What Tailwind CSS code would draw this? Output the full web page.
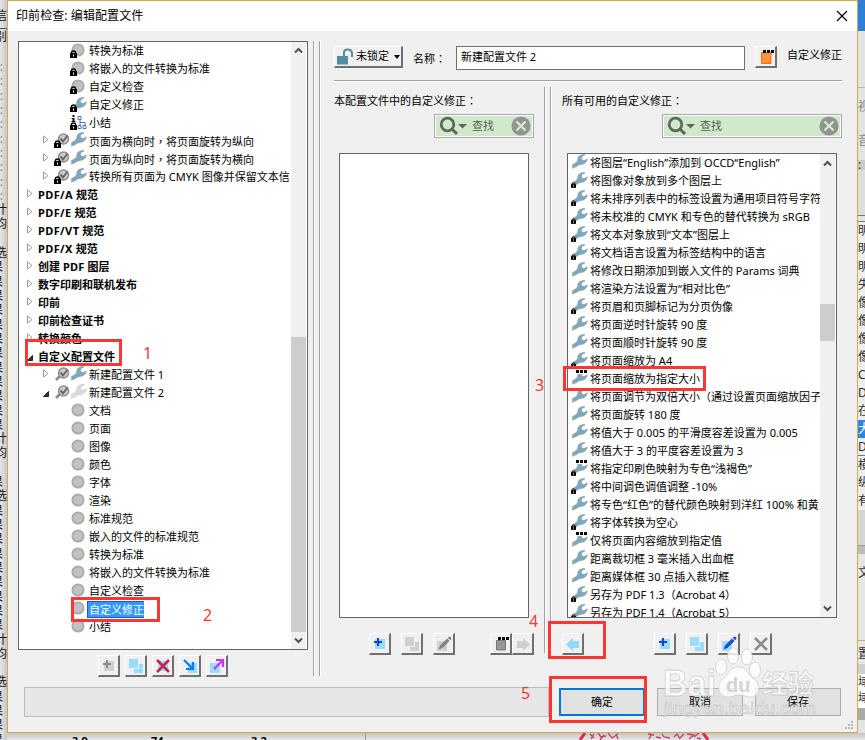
<!DOCTYPE html>
<html lang="zh-CN">
<head>
<meta charset="utf-8">
<title>印前检查: 编辑配置文件</title>
<script src="https://cdn.jsdelivr.net/npm/@tailwindcss/browser@4"></script>
</head>
<body class="relative w-[865px] h-[740px] overflow-hidden bg-[#e3e3e3] text-black text-[11px] font-['Noto_Sans','Noto_Sans_CJK_SC',sans-serif]">

<svg class="hidden">
  <symbol id="wrench" viewBox="0 0 16 15"><path d="M13 .3C9 .3 5.800 1.600 5.500 5.400C5.400 7.200 4.600 8 3 8.900L.3 10.500V14.600L4.400 12.800C6 11.600 7.200 10.800 9 10.800C12.400 10.600 14.800 8.800 15.700 4.600L12.200 6.200C10.600 6.500 9.300 5.200 9.700 3.700C10.100 2.300 11.500 1.900 13 1.200Z" stroke-width=".4" stroke="#82a7b8" stroke-opacity=".5"/></symbol>
  <symbol id="lock" viewBox="0 0 7 8"><path d="M1.500 4V2.200Q1.500 1 3.500 1T5.500 2.200V4" fill="none" stroke="#000" stroke-width="1.400"/><path d="M0 3h7v5H0z" fill="#000"/><path d="M3 4.500h1v2H3z" fill="#fff"/></symbol>
  <symbol id="dots" viewBox="0 0 11 3"><path d="M0 0h3v3H0zM4 0h3v3H4zM8 0h3v3H8z" fill="#000"/></symbol>
  <symbol id="ball" viewBox="0 0 14 14"><circle cx="7" cy="7" r="5.600" fill="#c2c2c2" stroke="#adadad" stroke-width="2"/></symbol>
  <symbol id="lens" viewBox="0 0 15 14"><path d="M5 9L1 13" stroke="#8c8c8c" stroke-width="2.600"/><circle cx="8.500" cy="6" r="5" fill="#cdcdcd" stroke="#8c8c8c" stroke-width="1.500"/><path d="M5.500 5.500L8 8.500L12.500 2.500" fill="none" stroke="#686868" stroke-width="2"/></symbol>
  <symbol id="tree" viewBox="0 0 15 15"><path d="M1 0h2v2H1zM0 3h3v3h1v1H0V6h1V4H0z" fill="#111"/><path d="M6.500 1.500h3v3h-3zM8.500 4.500v6M8.500 7.500h5v3M6.500 10.500h3v3h-3zM11.500 10.500h3v3h-3z" fill="none" stroke="#5471b8"/></symbol>
  <symbol id="closed" viewBox="0 0 6 9"><path d="M.5.9L5 4.500L.5 8.100Z" fill="#fff" stroke="#9b9b9b"/></symbol>
  <symbol id="open" viewBox="0 0 6 6"><path d="M5.500.5V5.500H.5Z" fill="#333" stroke="#222"/></symbol>
  <symbol id="up" viewBox="0 0 9 7"><path d="M1 5.500L4.500 2L8 5.500" fill="none" stroke="#505050" stroke-width="2"/></symbol>
  <symbol id="down" viewBox="0 0 9 7"><path d="M1 1.500L4.500 5L8 1.500" fill="none" stroke="#505050" stroke-width="2"/></symbol>
  <symbol id="search" viewBox="0 0 28 20"><circle cx="8.500" cy="8.500" r="6.300" fill="none" stroke="#5f675d" stroke-width="2.800"/><path d="M13 13L18 18" stroke="#5f675d" stroke-width="3"/><path d="M19 8h9L23.500 12.500z" fill="#5f675d"/></symbol>
  <symbol id="clear" viewBox="0 0 20 20"><circle cx="10" cy="10" r="9.600" fill="#929492"/><path d="M5.500 5.500L14.500 14.500M14.500 5.500L5.500 14.500" stroke="#d6ecd2" stroke-width="2.200"/></symbol>
  <symbol id="add" viewBox="0 0 20 20"><path d="M5 5h10v10H5z" fill="#9adcfa"/><path d="M8 4v8M4 8h8" stroke="#1348c8" stroke-width="2"/></symbol>
  <symbol id="add-off" viewBox="0 0 20 20"><path d="M5 5h10v10H5z" fill="#cfcfcf"/><path d="M8 4v8M4 8h8" stroke="#8a8a8a" stroke-width="2"/></symbol>
  <symbol id="copy" viewBox="0 0 20 20"><path d="M3 3h9v9H3zM13 8h4v9H8v-4h5z"/></symbol>
  <symbol id="cross" viewBox="0 0 20 20"><path d="M4 4L16 16M16 4L4 16" fill="none" stroke-width="2.600"/></symbol>
  <symbol id="pencil" viewBox="0 0 20 20"><path d="M4.500 15.500L6 11.500L13 4.500L15.500 7L8.500 14ZM13.700 3.800L15 2.700H16.500L17.300 3.500V5L16.200 6.300Z"/></symbol>
</svg>

<!-- desktop windows visible around the dialog -->
<div id="leftEdge" class="absolute left-0 top-0 w-[7px] h-[740px] overflow-hidden bg-linear-to-r from-[#e6e6e6] to-[#c6c6c6] text-[12px] text-[#151515]"></div>
<div id="rightEdge" class="absolute left-[858px] top-0 w-[7px] h-[740px] overflow-hidden text-[12px] text-[#303030]"></div>
<div class="absolute left-[7px] top-[733px] w-[858px] h-[7px] overflow-hidden bg-linear-to-b from-[#c4c4c4] to-[#e8e8e8] text-[11px] leading-[15px] font-bold">
  <div class="flex h-[7px]">
    <span class="pl-[65px] w-[144px]">3.9</span><span class="w-[100px]">74</span><span class="w-[114px]">3.2</span><span class="w-px bg-[#999]"></span>
    <svg class="ml-[213px]" width="130" height="7" fill="none" stroke="#c93a72" stroke-width="1.300"><path d="M1 7L6 0M124 0L129 7" stroke="#e0274c" stroke-width="3"/><path d="M11 1l4 4M15 1l-3 5M19 0l3 4 5-1M25 2l-4 5M29 0l4 5 6-4M37 1l2 5M69 1l6 1M72 2l-2 4M77 4l5 1M83 1l2 3 6 1M95 4l3-3 3 5M105 1l-4 4M108 1l7 1-5 4M115 4l5-4M118 5l4 1"/></svg>
  </div>
</div>

<main class="absolute left-[7px] top-0 w-[851px] h-[733px] border border-[#d3a94f] bg-[#f0f0f0] flex flex-col">
  <header class="h-[30px] shrink-0 bg-white flex items-center justify-between pl-2 pr-[9px]">
    <h1 class="text-[12px] leading-[16px] tracking-[0.08px]">印前检查: 编辑配置文件</h1>
    <svg width="12" height="12" viewBox="0 0 12 12" class="mb-px"><path d="M1 1L11 11M11 1L1 11" stroke="#000" stroke-width="1.200"/></svg>
  </header>

  <div class="flex h-[646px] pt-[10px] pl-[10px]">
    <section class="w-[290px] shrink-0">
      <div class="h-[609px] border border-[#646464] bg-white flex overflow-hidden">
        <div id="tree-list" class="w-[272px] shrink-0 overflow-hidden"></div>
        <div class="w-[15px] bg-[#f0f0f0] flex flex-col items-center">
          <svg class="mt-[5px]" width="9" height="7"><use href="#up"/></svg>
          <div class="mt-[283px] w-full h-[295px] bg-[#cdcdcd]"></div>
          <svg class="mt-[5px]" width="9" height="7"><use href="#down"/></svg>
        </div>
      </div>
      <div class="flex gap-[5px] pt-[5px] pl-[80px]" id="tools-left"></div>
    </section>

    <div class="ml-[5px] w-[8px] h-[635px] flex justify-between shrink-0">
      <i class="w-[2px] bg-white border-l border-[#a0a0a0]"></i><i class="w-[2px] bg-white border-l border-[#a0a0a0]"></i>
    </div>

    <section class="ml-[13px] w-[508px] shrink-0">
      <div class="h-[39px] pt-[5px] flex items-start">
        <button class="w-[69px] h-[22px] bg-[#f0f0f0] border-t border-l border-r-2 border-b-2 border-t-white border-l-white border-r-[#707070] border-b-[#707070] flex items-center pl-[2px]">
          <svg class="shrink-0" width="17" height="17" viewBox="0 0 17 17"><path d="M0 8h11v8.500H0z" fill="#578ba2"/><path d="M7 8V4.500Q7 1.500 10.700 1.500T15 5V9" fill="none" stroke="#578ba2" stroke-width="2"/></svg>
          <span class="ml-[2px] whitespace-nowrap">未锁定</span>
          <svg class="ml-[5px] shrink-0" width="6" height="4"><path d="M0 0h6L3 4z"/></svg>
        </button>
        <span class="ml-[10px] w-[43px] mt-[3px] leading-[18px]">名称<span class="font-['Noto_Sans_CJK_TC']" lang="zh-TW">：</span></span>
        <div class="w-[289px] h-[24px] bg-white border border-[#707070] pl-[4px] leading-[20px] text-[11px]">新建配置文件 2</div>
        <button class="ml-[10px] w-[22px] h-[22px] border-t border-l border-r-2 border-b-2 border-t-white border-l-white border-r-[#707070] border-b-[#707070]">
          <svg width="20" height="20"><path d="M5.500 5.500h9.500v11H5.500z" fill="#ff9440" stroke="#f46b12"/><path d="M7 3h3v3H7zM11 3h3v3h-3zM15 3h3v3h-3z"/></svg>
        </button>
        <span class="ml-[10px] leading-[17px] whitespace-nowrap">自定义修正</span>
      </div>
      <div class="h-[2px] bg-white border-t border-[#a0a0a0]"></div>

      <div class="flex pt-[5px]">
        <div class="w-[200px] shrink-0">
          <h2 class="h-[27px] leading-[27px]">本配置文件中的自定义修正<span class="font-['Noto_Sans_CJK_TC']" lang="zh-TW">：</span></h2>
          <div class="ml-[100px] w-[100px] h-[24px] border border-[#a7aaad] bg-[#cfe9ca] ring-1 ring-inset ring-white flex items-center pl-[4px] pr-[2px]">
            <svg width="28" height="20"><use href="#search"/></svg><span class="ml-[5px] text-[#555f53]">查找</span><svg class="ml-auto" width="20" height="20"><use href="#clear"/></svg>
          </div>
          <div class="mt-[15px] ml-[5px] w-[190px] h-[465px] bg-white border border-[#646464]"></div>
          <div class="mt-[15px] ml-[35px] flex" id="tools-mid"></div>
        </div>
        <div class="ml-[10px] w-[8px] h-[566px] flex justify-between shrink-0">
          <i class="w-[2px] bg-white border-l border-[#a0a0a0]"></i><i class="w-[2px] bg-white border-l border-[#a0a0a0]"></i>
        </div>
        <div class="ml-[10px] w-[280px] shrink-0">
          <h2 class="h-[27px] leading-[27px]">所有可用的自定义修正<span class="font-['Noto_Sans_CJK_TC']" lang="zh-TW">：</span></h2>
          <div class="ml-[100px] w-[180px] h-[24px] border border-[#a7aaad] bg-[#cfe9ca] ring-1 ring-inset ring-white flex items-center pl-[4px] pr-[2px]">
            <svg width="28" height="20"><use href="#search"/></svg><span class="ml-[5px] text-[#555f53]">查找</span><svg class="ml-auto" width="20" height="20"><use href="#clear"/></svg>
          </div>
          <div class="mt-[15px] ml-[5px] w-[270px] h-[465px] bg-white border border-[#646464] flex overflow-hidden">
            <div id="fix-list" class="w-[252px] shrink-0 overflow-hidden"></div>
            <div class="w-[15px] bg-[#f0f0f0] flex flex-col items-center">
              <svg class="mt-[6px] shrink-0" width="9" height="7"><use href="#up"/></svg>
              <div class="mt-[137px] w-full h-[37px] shrink-0 bg-[#cdcdcd]"></div>
              <svg class="mt-[264px] shrink-0" width="9" height="7"><use href="#down"/></svg>
            </div>
          </div>
          <div class="mt-[15px] flex" id="tools-right"></div>
        </div>
      </div>
    </section>
  </div>

  <footer class="flex pl-[16px] pt-[10px] items-start text-[11px]">
    <div class="w-[525px] h-[30px] bg-[#e6e6e6] border border-[#bcbcbc]"></div>
    <button class="ml-[10px] mt-px w-[86px] h-[28px] bg-[#e1e1e1] border-2 border-[#0078d7]">确定</button>
    <button class="ml-[12px] mt-px w-[86px] h-[28px] bg-[#e1e1e1] border border-[#adadad]">取消</button>
    <button class="ml-[12px] mt-px w-[86px] h-[28px] bg-[#e1e1e1] border border-[#adadad]">保存</button>
  </footer>
  <svg class="absolute right-[3px] bottom-[2px]" width="9" height="9" fill="#b8b8b8"><path d="M6 0h2v2H6zM3 3h2v2H3zM6 3h2v2H6zM0 6h2v2H0zM3 6h2v2H3zM6 6h2v2H6z"/></svg>
</main>

<!-- watermark -->
<svg class="absolute left-[655px] top-[640px] font-['Liberation_Sans','Noto_Sans_CJK_SC',sans-serif]" width="175" height="85" fill="#fff" fill-opacity=".8" stroke="#bdbdbd" stroke-opacity=".7" stroke-width=".8">
  <text x="8" y="56" font-size="36" font-weight="bold" textLength="53" lengthAdjust="spacingAndGlyphs">Bai</text>
  <ellipse cx="66" cy="27" rx="5.500" ry="8"/><ellipse cx="78" cy="16" rx="5.500" ry="8"/><ellipse cx="92" cy="17" rx="5.500" ry="8"/><ellipse cx="100" cy="30" rx="5.500" ry="8"/>
  <path d="M83 27C75 27 74 34 69 38C61 44 62 56 72 57C78 57 80 55 84 55S91 57 96 57C106 56 106 44 98 38C92 34 92 27 83 27Z"/>
  <text x="71" y="52" font-size="20" font-weight="bold" fill="#c9c9c9" stroke="none">du</text>
  <text x="107" y="53" font-size="26" font-weight="bold">经验</text>
  <text x="9" y="74" font-size="17" fill-opacity=".6" textLength="152" lengthAdjust="spacingAndGlyphs">jingyan.baidu.com</text>
</svg>

<!-- step markers -->
<div class="absolute left-[25px] top-[339px] w-[97px] h-[27px] border-3 border-[#fb3735]"></div>
<div class="absolute left-[71px] top-[597px] w-[89px] h-[25px] border-3 border-[#fb3735]"></div>
<div class="absolute left-[563px] top-[366px] w-[143px] h-[25px] border-3 border-[#fb3735]"></div>
<div class="absolute left-[548px] top-[621px] w-[58px] h-[38px] border-3 border-[#fb3735]"></div>
<div class="absolute left-[549px] top-[676px] w-[98px] h-[47px] border-3 border-[#fb3735]"></div>
<b class="absolute left-[143px] top-[343px] text-[16px] leading-[20px] font-normal text-[#fb3735]">1</b>
<b class="absolute left-[203px] top-[605px] text-[16px] leading-[20px] font-normal text-[#fb3735]">2</b>
<b class="absolute left-[535px] top-[375px] text-[16px] leading-[20px] font-normal text-[#fb3735]">3</b>
<b class="absolute left-[529px] top-[611px] text-[16px] leading-[20px] font-normal text-[#fb3735]">4</b>
<b class="absolute left-[521px] top-[683px] text-[16px] leading-[20px] font-normal text-[#fb3735]">5</b>

<script>
const $ = id => document.getElementById(id);
const wrench = '<svg class="shrink-0 fill-[#82a7b8]" width="16" height="15"><use href="#wrench"/></svg>';
const lock = '<svg class="absolute -left-px -bottom-px" width="7" height="8"><use href="#lock"/></svg>';
const icons = {
  ball: '<svg width="14" height="14"><use href="#ball"/></svg>',
  wrench,
  tree: '<svg width="16" height="15"><use href="#tree"/></svg>'
};
// centred full-width punctuation
const punct = t => t.replace(/[，：]/g, m => `<span lang="zh-TW" class="font-['Noto_Sans_CJK_TC']">${m}</span>`);

// kind: g = group, p = profile, c = child entry
const tree = [
  ['c','转换为标准','ball',1],['c','将嵌入的文件转换为标准','ball',1],['c','自定义检查','ball',1],['c','自定义修正','wrench',1],['c','小结','tree',1],
  ['p','页面为横向时，将页面旋转为纵向',0,1],['p','页面为纵向时，将页面旋转为横向',0,1],['p','转换所有页面为 CMYK 图像并保留文本信',0,1],
  ['g','<span class="tracking-[0.4px]">PDF/A</span> 规范'],['g','<span class="tracking-[0.4px]">PDF/E</span> 规范'],['g','<span class="tracking-[0.4px]">PDF/VT</span> 规范'],['g','<span class="tracking-[0.4px]">PDF/X</span> 规范'],['g','创建 <span class="tracking-[0.3px]">PDF</span> 图层'],['g','数字印刷和联机发布'],['g','印前'],['g','印前检查证书'],['g','转换颜色'],['g','自定义配置文件',1],
  ['p','新建配置文件 1'],['p','新建配置文件 2',1],
  ...['文档','页面','图像','颜色','字体','渲染','标准规范','嵌入的文件的标准规范','转换为标准','将嵌入的文件转换为标准','自定义检查','自定义修正','小结'].map(t => ['c',t,'ball',0])
];
$('tree-list').innerHTML = tree.map(([k,t,a,l], i) => {
  const arrow = a === 1 ? '<svg class="mt-[1px]" width="6" height="6"><use href="#open"/></svg>' : '<svg class="-mt-[3px]" width="6" height="9"><use href="#closed"/></svg>';
  if (k === 'g') return `<div class="h-[18px] flex items-center pl-[8px] whitespace-nowrap font-bold"><span class="w-[11px] flex shrink-0">${arrow}</span><span class="pt-px">${t}</span></div>`;
  if (k === 'p') return `<div class="h-[18px] flex items-center pl-[24px] whitespace-nowrap"><span class="w-[12px] flex shrink-0">${arrow}</span><span class="relative flex w-[16px] h-[14px] shrink-0 -mt-[3px]"><svg width="15" height="14"><use href="#lens"/></svg>${l ? lock : ''}</span><span class="flex w-[18px] h-[15px] shrink-0 -mt-[3px]">${a === 1 ? '<svg class="fill-[#d9d9d9]" width="16" height="15"><use href="#wrench"/></svg>' : wrench}</span><span class="pt-px">${punct(t)}</span></div>`;
  const sel = i === 31;
  return `<div class="h-[18px] flex items-center pl-[52px] whitespace-nowrap"><span class="relative flex w-[16px] h-[14px] shrink-0 -mt-[3px]">${icons[a]}${l ? lock : ''}</span><span class="${sel ? 'h-[17px] leading-[16px] w-[57px] pl-px border border-r-0 border-[#20609f] bg-[#3399ff] text-white' : 'pl-[2px] pt-px'}">${t}</span></div>`;
}).join('');

// flags: l = locked, d = has parameters
const fixes = [
  ['将图层“English”添加到 OCCD“English”',''],['将图像对象放到多个图层上','l'],['将未排序列表中的标签设置为通用项目符号字符','l'],['将未校准的 CMYK 和专色的替代转换为 sRGB','l'],['将文本对象放到“文本”图层上','l'],['将文档语言设置为标签结构中的语言','l'],['将修改日期添加到嵌入文件的 Params 词典',''],['将渲染方法设置为“相对比色”',''],['将页眉和页脚标记为分页伪像','l'],['将页面逆时针旋转 90 度',''],['将页面顺时针旋转 90 度',''],['将页面缩放为 A4','l'],['将页面缩放为指定大小','d'],['将页面调节为双倍大小（通过设置页面缩放因子',''],['将页面旋转 180 度',''],['将值大于 0.005 的平滑度容差设置为 0.005',''],['将值大于 3 的平度容差设置为 3',''],['将指定印刷色映射为专色“浅褐色”','ld'],['将中间调色调值调整 -10%','l'],['将专色“红色”的替代颜色映射到洋红 100% 和黄',''],['将字体转换为空心','l'],['仅将页面内容缩放到指定值','d'],['距离裁切框 3 毫米插入出血框',''],['距离媒体框 30 点插入裁切框',''],['另存为 PDF 1.3（Acrobat 4）','l'],['另存为 PDF 1.4（Acrobat 5）','l']
];
$('fix-list').innerHTML = fixes.map(([t,f]) => `<div class="h-[18px] flex items-center pl-[4px] whitespace-nowrap"><span class="relative flex w-[18px] h-[15px] shrink-0 -mt-[3px]">${wrench}${f.includes('l') ? '<svg class="absolute -left-px -bottom-px" width="5" height="6"><use href="#lock"/></svg>' : ''}${f.includes('d') ? '<span class="absolute left-[4px] top-0 w-[12px] h-[4px] bg-white"></span><svg class="absolute left-[4px] top-0" width="11" height="3"><use href="#dots"/></svg>' : ''}</span><span class="pt-px">${t}</span></div>`).join('');

const btn = (ml, art) => `<button class="${ml} w-[22px] h-[22px] shrink-0 border-t border-l border-r-2 border-b-2 border-t-white border-l-white border-r-[#707070] border-b-[#707070]"><svg width="20" height="20">${art}</svg></button>`;
const copyOn = '<use href="#copy" fill="#9adcfa"/>', copyOff = '<use href="#copy" fill="#d0d0d0"/>';
$('tools-left').innerHTML =
  btn('ml-0','<use href="#add-off"/>') + btn('ml-0',copyOn) +
  btn('ml-0','<path d="M5 5h10v10H5z" fill="#9adcfa"/><use href="#cross" stroke="#c2264e"/>') +
  btn('ml-0','<path d="M8 7h9v10H8z" fill="#9adcfa"/><path d="M4 4L12 12M13 6V13H6" fill="none" stroke="#0a7df5" stroke-width="2.200"/>') +
  btn('ml-0','<path d="M3 7h10v10H3z" fill="#9adcfa"/><path d="M7 13L15 5M9 4H16V11" fill="none" stroke="#c832f0" stroke-width="2.200"/>');
$('tools-mid').innerHTML =
  btn('ml-0','<use href="#add"/>') + btn('ml-[10px]',copyOff) +
  btn('ml-[10px]','<path d="M3 7h10v10H3z" fill="#d0d0d0"/><use href="#pencil" fill="#858585"/>') +
  btn('ml-[35px]','<path d="M5.500 6.500h9v9.500h-9z" fill="#969696" stroke="#777"/><path d="M7 3h3v3H7zM11 3h3v3h-3zM15 3h3v3h-3z"/>') +
  btn('ml-0','<path d="M4 7h6V4l7 6.500L10 17v-3H4z" fill="#cfcfcf"/>');
$('tools-right').innerHTML =
  btn('ml-0','<path d="M16 7h-6V4l-7 6.500L10 17v-3h6z" fill="#93d9f9"/>') +
  btn('ml-[70px]','<use href="#add"/>') + btn('ml-[10px]',copyOn) +
  btn('ml-[10px]','<path d="M3 7h10v10H3z" fill="#9adcfa"/><use href="#pencil" fill="#1c4fd0"/>') +
  btn('ml-[10px]','<use href="#cross" stroke="#8a8a8a"/>');

// clipped columns of the windows behind
const L = [];
for (let k = 0; k < 48; k++) {
  const ch = k < 10 ? ':' : ({10:'计',11:'均',12:'',13:'选',26:'计',27:'均',28:'',30:'选',40:'计',41:'均',42:'',43:'选'}[k] ?? '果');
  L.push(`<div class="h-[14.32px] leading-[14.32px] flex justify-end whitespace-nowrap ${ch === '果' ? 'mr-[4px]' : ch === ':' ? 'mr-[4px] text-[#888]' : 'mr-0'}">${ch}</div>`);
}
$('leftEdge').innerHTML = `<div class="h-[29px] pt-[8px] leading-[16px] flex justify-end border-b border-[#555]">信</div><div class="h-[31px] leading-[16px] flex justify-end">别</div>` + L.join('');

const R = ['明','明','明','失','像','像','像','像','C','D','在','大','D','横','纵','有'];
$('rightEdge').innerHTML =
  '<div class="h-[31px] bg-[#2f7fd9]"></div><div class="h-[57px] bg-[#e3e3e3] border-b border-[#bbb]"></div>' +
  '<div class="h-[72px] bg-[#e3e3e3] pt-[10px] leading-[18px] text-[#888]"><div class="h-[34px] w-[12px]">视</div><div class="w-[12px]">音</div></div>' +
  '<div class="h-[10px] bg-[#c9c9c9] leading-[9px]">:</div><div class="h-[45px] bg-[#dedede]"></div><div class="h-[7px] border-y border-[#777]"></div>' +
  R.map((c,i) => `<div class="h-[18px] leading-[18px] w-[12px] ${i === 11 ? 'bg-[#2f86e0] text-white' : i === 12 ? 'bg-[#eeeeee] border-b border-[#3d87cc]' : 'bg-[#eeeeee]'}">${c}</div>`).join('') +
  '<div class="h-[36px] bg-[#d5d5d5] border-b border-[#999]"></div><div class="h-[8px] bg-[#bdbdbd]"></div>' +
  '<div class="h-[86px] bg-[#e6e6e6] pt-[10px] leading-[18px]"><div class="w-[12px]">文</div></div>' +
  '<div class="h-[24px] border-t border-[#d3a94f] bg-[#e6e6e6] pt-[4px] leading-[18px]"><div class="w-[12px]">置</div></div>' +
  '<div class="h-[10px] bg-[#d0d0d0]"></div><div class="h-[34px] bg-white leading-[16px]"><div class="w-[12px]">域</div><div class="w-[12px]">域</div></div><div class="h-[12px] bg-[#aaa]"></div>';
</script>
</body>
</html>
